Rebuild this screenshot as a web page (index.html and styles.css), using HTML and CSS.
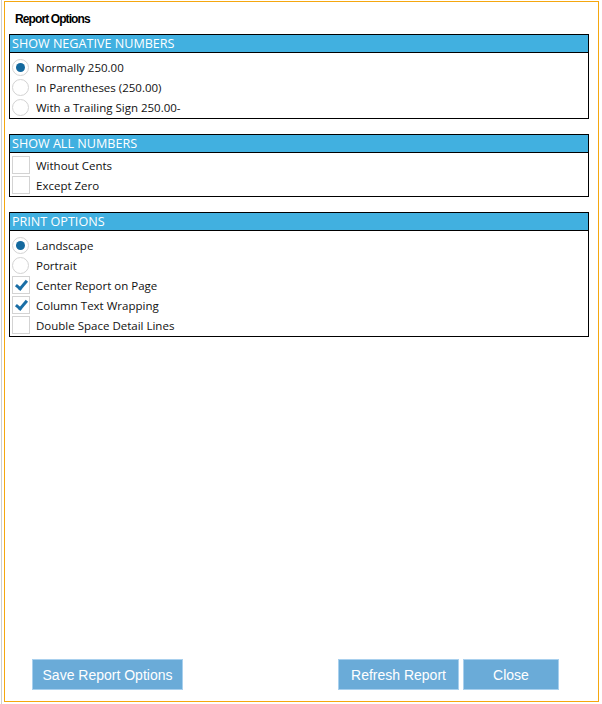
FILE: index.html
```html
<!DOCTYPE html>
<html lang="en">
<head>
    <meta charset="UTF-8">
    <meta name="viewport" content="width=device-width, initial-scale=1.0">
    <title>Report Options</title>
    <link rel="stylesheet" href="styles.css">
</head>
<body>

    <div class="dialog">
        <h1 class="dialog-title">Report Options</h1>

        <div class="group">
            <div class="group-header">SHOW NEGATIVE NUMBERS</div>
            <div class="group-body">
                <label class="option"><span class="radio checked"></span>Normally 250.00</label>
                <label class="option"><span class="radio"></span>In Parentheses (250.00)</label>
                <label class="option"><span class="radio"></span>With a Trailing Sign 250.00-</label>
            </div>
        </div>

        <div class="group">
            <div class="group-header">SHOW ALL NUMBERS</div>
            <div class="group-body tight">
                <label class="option"><span class="check"></span>Without Cents</label>
                <label class="option"><span class="check"></span>Except Zero</label>
            </div>
        </div>

        <div class="group">
            <div class="group-header">PRINT OPTIONS</div>
            <div class="group-body">
                <label class="option"><span class="radio checked"></span>Landscape</label>
                <label class="option"><span class="radio"></span>Portrait</label>
                <label class="option"><span class="check checked"></span>Center Report on Page</label>
                <label class="option"><span class="check checked"></span>Column Text Wrapping</label>
                <label class="option"><span class="check"></span>Double Space Detail Lines</label>
            </div>
        </div>

        <div class="buttons">
            <button class="btn btn-save">Save Report Options</button>
            <div class="buttons-right">
                <button class="btn btn-refresh">Refresh Report</button>
                <button class="btn btn-close">Close</button>
            </div>
        </div>
    </div>

</body>
</html>
```

FILE: styles.css
```css
body {
    margin: 0;
    padding: 1px 0 0 4px;
    font-family: 'Liberation Sans', Arial, sans-serif;
    background: linear-gradient(to right, #fff 1px, #cfcfcf 1px, #cfcfcf 2px, #fff 2px);
    color: #111;
}

.dialog {
    box-sizing: border-box;
    width: 595px;
    height: 701px;
    border: 1px solid #f5a70f;
    background: #fff;
    padding: 0 0 0 4px;
    display: flex;
    flex-direction: column;
}

.dialog-title {
    margin: 9px 0 0 6px;
    height: 23px;
    font-size: 12px;
    font-weight: bold;
    letter-spacing: -0.9px;
    line-height: 16px;
    color: #000;
}

.group {
    width: 580px;
    box-sizing: border-box;
    border: 1px solid #000;
    margin-bottom: 15px;
}

.group-header {
    height: 17px;
    line-height: 18px;
    background: #41b0e0;
    border-bottom: 1px solid #000;
    color: #fff;
    font-family: 'Open Sans', sans-serif;
    font-size: 12.6px;
    padding-left: 2px;
}

.group-body {
    padding: 4px 0 1px 2px;
}

.group-body.tight {
    padding-top: 2px;
}

.option {
    display: flex;
    align-items: center;
    height: 20px;
    font-family: 'Open Sans', sans-serif;
    font-size: 11.5px;
    color: #111;
}

.radio {
    box-sizing: border-box;
    width: 17px;
    height: 17px;
    border: 1px solid #d3d3d3;
    border-radius: 50%;
    margin-right: 7px;
    position: relative;
}

.radio.checked::after {
    content: "";
    position: absolute;
    left: 3px;
    top: 3px;
    width: 9px;
    height: 9px;
    border-radius: 50%;
    background: #14699e;
}

.check {
    box-sizing: border-box;
    width: 18px;
    height: 18px;
    border: 1px solid #d3d3d3;
    margin-right: 6px;
    position: relative;
}

.check.checked::after {
    content: "";
    position: absolute;
    left: 5px;
    top: 1px;
    width: 4px;
    height: 9px;
    border: solid #1a6ea6;
    border-width: 0 3px 3px 0;
    transform: rotate(40deg);
}

.buttons {
    margin-top: auto;
    display: flex;
    justify-content: space-between;
    padding: 0 39px 11px 23px;
}

.buttons-right {
    display: flex;
    gap: 4px;
}

.btn {
    height: 31px;
    box-sizing: border-box;
    background: #6aabd8;
    border: 1px solid #a8d0ee;
    color: #fff;
    font-family: 'Liberation Sans', Arial, sans-serif;
    font-size: 14px;
    padding: 0;
}

.btn-save {
    width: 151px;
}

.btn-refresh {
    width: 121px;
}

.btn-close {
    width: 96px;
}
```
